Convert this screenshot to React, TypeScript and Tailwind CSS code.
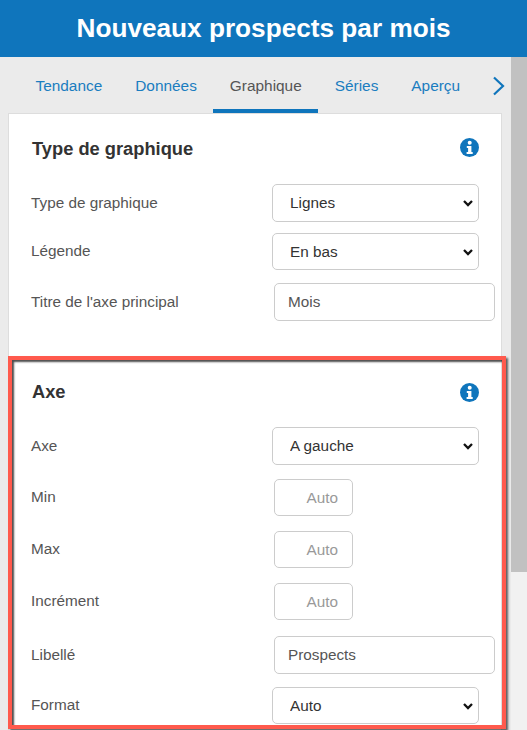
import React from "react";

const tabs = ["Tendance", "Données", "Graphique", "Séries", "Aperçu"];

function Info() {
  return (
    <svg width="19" height="19" viewBox="0 0 19 19" className="block">
      <circle cx="9.5" cy="9.5" r="9.5" fill="#0f75bc" />
      <circle cx="9.7" cy="4.7" r="2" fill="#fff" />
      <path d="M6.8 8h4.6v6h1.3v2H6.6v-2h1.5v-4H6.8z" fill="#fff" />
    </svg>
  );
}

function Row({ label, h, mb, children }: { label: string; h: string; mb: string; children: React.ReactNode }) {
  return (
    <div className={`flex items-center ${h} ${mb}`}>
      <div className="w-[240px] shrink-0 pl-[22px] text-[15.3px] text-[#555]">{label}</div>
      {children}
    </div>
  );
}

function Select({ value, cls = "h-[38px]" }: { value: string; cls?: string }) {
  return (
    <div className="relative ml-[23px] w-[207px]">
      <select
        defaultValue={value}
        className={`block w-full ${cls} appearance-none rounded-[5px] border border-[#ccc] bg-white pl-[17px] text-[15.3px] text-[#333]`}
      >
        <option>{value}</option>
      </select>
      <svg width="10" height="7" viewBox="0 0 10 7" fill="none" stroke="#111" strokeWidth="2.3" className="pointer-events-none absolute right-[6px] top-1/2 -translate-y-[3px]">
        <path d="M1 1 L5 5 L9 1" />
      </svg>
    </div>
  );
}

function TextInput({ value }: { value: string }) {
  return (
    <input
      readOnly
      value={value}
      className="ml-[25px] h-[38px] w-[221px] rounded-[5px] border border-[#ccc] bg-white pl-[13px] text-[15.3px] text-[#555] outline-none"
    />
  );
}

function NumInput() {
  return (
    <input
      readOnly
      placeholder="Auto"
      className="ml-[25px] h-[37px] w-[79px] rounded-[5px] border border-[#ccc] bg-white pr-[14px] text-right text-[15.3px] outline-none placeholder:text-[#999]"
    />
  );
}

export default function App() {
  return (
    <div className="flex h-[730px] w-[527px] flex-col overflow-hidden bg-[#ebebeb] font-['Liberation_Sans',Arial,sans-serif]">
      <header className="flex h-[57px] shrink-0 items-center justify-center bg-[#0f75bc] text-[26.2px] font-bold text-white">
        Nouveaux prospects par mois
      </header>
      <div className="flex min-h-0 flex-1">
        <main className="flex w-[511px] shrink-0 flex-col">
          <nav className="flex h-[56px] shrink-0 pl-[19px]">
            {tabs.map((t) => (
              <div
                key={t}
                className={`flex items-center border-b-4 px-[16.5px] pt-[5px] text-[15.4px] ${
                  t === "Graphique" ? "border-[#0f75bc] text-[#555]" : "border-transparent text-[#1a7dc0]"
                }`}
              >
                {t}
              </div>
            ))}
            <svg width="14" height="20" viewBox="0 0 14 20" className="ml-[15px] mt-[19px]" fill="none" stroke="#0f75bc" strokeWidth="2.2">
              <path d="M2 1.5 L11 10 L2 18.5" />
            </svg>
          </nav>
          <section className="ml-2 mr-[9px] flex-1 border border-b-0 border-[#ddd] bg-white">
            <div className="flex items-center justify-between pl-[23px] pr-[22px] pt-[23px]">
              <h2 className="text-[18.3px] font-bold leading-[24px] text-[#333]">Type de graphique</h2>
              <div className="-mt-[3px]"><Info /></div>
            </div>
            <div className="mt-[23px]">
              <Row label="Type de graphique" h="h-[38px]" mb="mb-[11px]"><Select value="Lignes" /></Row>
              <Row label="Légende" h="h-[37px]" mb="mb-[13px]"><Select value="En bas" cls="h-[37px] pt-[2px]" /></Row>
              <Row label="Titre de l'axe principal" h="h-[38px]" mb=""><TextInput value="Mois" /></Row>
            </div>
            <div className="relative mt-[35px] h-[373px] pt-[24px]">
              <div className="flex items-center justify-between pl-[23px] pr-[22px]">
                <h2 className="text-[18.3px] font-bold leading-[24px] text-[#333]">Axe</h2>
                <Info />
              </div>
              <div className="mt-[23px]">
                <Row label="Axe" h="h-[38px]" mb="mb-[14px]"><Select value="A gauche" /></Row>
                <Row label="Min" h="h-[37px]" mb="mb-[15px]"><NumInput /></Row>
                <Row label="Max" h="h-[37px]" mb="mb-[15px]"><NumInput /></Row>
                <Row label="Incrément" h="h-[37px]" mb="mb-[16px]"><NumInput /></Row>
                <Row label="Libellé" h="h-[38px]" mb="mb-[13px]"><TextInput value="Prospects" /></Row>
                <Row label="Format" h="h-[37px]" mb=""><Select value="Auto" cls="h-[37px] pt-[2px]" /></Row>
              </div>
              <div className="pointer-events-none absolute -left-px -right-[5px] top-0 h-[373px] border-4 border-[#ff5a4d] shadow-[inset_2px_2px_2px_rgba(0,0,0,0.7),2px_2px_2px_rgba(0,0,0,0.6)]" />
            </div>
          </section>
        </main>
        <aside className="flex w-[16px] shrink-0 flex-col bg-[#f1f1f1]">
          <div className="h-[515px] bg-[#c1c1c1]" />
        </aside>
      </div>
    </div>
  );
}
